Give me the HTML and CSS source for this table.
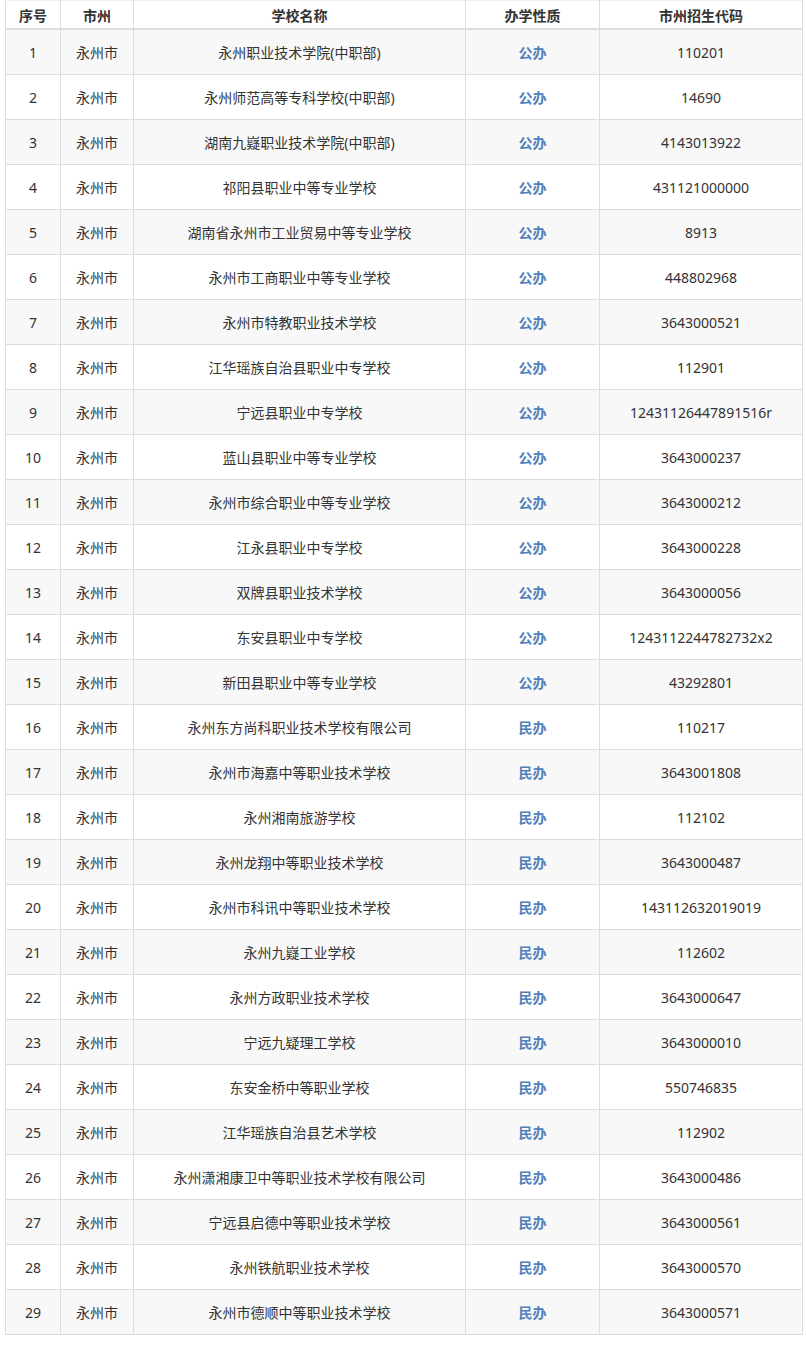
FILE: index.html
```html
<!DOCTYPE html>
<html lang="zh-CN">
<head>
<meta charset="utf-8">
<title>永州市中职学校</title>
<link rel="stylesheet" href="styles.css">
</head>
<body>
<div class="wrap">
<table class="list">
<colgroup>
<col class="c1"><col class="c2"><col class="c3"><col class="c4"><col class="c5">
</colgroup>
<thead>
<tr><th>序号</th><th>市州</th><th>学校名称</th><th>办学性质</th><th>市州招生代码</th></tr>
</thead>
<tbody>
<tr><td>1</td><td>永州市</td><td>永州职业技术学院(中职部)</td><td class="t">公办</td><td>110201</td></tr>
<tr><td>2</td><td>永州市</td><td>永州师范高等专科学校(中职部)</td><td class="t">公办</td><td>14690</td></tr>
<tr><td>3</td><td>永州市</td><td>湖南九嶷职业技术学院(中职部)</td><td class="t">公办</td><td>4143013922</td></tr>
<tr><td>4</td><td>永州市</td><td>祁阳县职业中等专业学校</td><td class="t">公办</td><td>431121000000</td></tr>
<tr><td>5</td><td>永州市</td><td>湖南省永州市工业贸易中等专业学校</td><td class="t">公办</td><td>8913</td></tr>
<tr><td>6</td><td>永州市</td><td>永州市工商职业中等专业学校</td><td class="t">公办</td><td>448802968</td></tr>
<tr><td>7</td><td>永州市</td><td>永州市特教职业技术学校</td><td class="t">公办</td><td>3643000521</td></tr>
<tr><td>8</td><td>永州市</td><td>江华瑶族自治县职业中专学校</td><td class="t">公办</td><td>112901</td></tr>
<tr><td>9</td><td>永州市</td><td>宁远县职业中专学校</td><td class="t">公办</td><td>12431126447891516r</td></tr>
<tr><td>10</td><td>永州市</td><td>蓝山县职业中等专业学校</td><td class="t">公办</td><td>3643000237</td></tr>
<tr><td>11</td><td>永州市</td><td>永州市综合职业中等专业学校</td><td class="t">公办</td><td>3643000212</td></tr>
<tr><td>12</td><td>永州市</td><td>江永县职业中专学校</td><td class="t">公办</td><td>3643000228</td></tr>
<tr><td>13</td><td>永州市</td><td>双牌县职业技术学校</td><td class="t">公办</td><td>3643000056</td></tr>
<tr><td>14</td><td>永州市</td><td>东安县职业中专学校</td><td class="t">公办</td><td>1243112244782732x2</td></tr>
<tr><td>15</td><td>永州市</td><td>新田县职业中等专业学校</td><td class="t">公办</td><td>43292801</td></tr>
<tr><td>16</td><td>永州市</td><td>永州东方尚科职业技术学校有限公司</td><td class="t">民办</td><td>110217</td></tr>
<tr><td>17</td><td>永州市</td><td>永州市海嘉中等职业技术学校</td><td class="t">民办</td><td>3643001808</td></tr>
<tr><td>18</td><td>永州市</td><td>永州湘南旅游学校</td><td class="t">民办</td><td>112102</td></tr>
<tr><td>19</td><td>永州市</td><td>永州龙翔中等职业技术学校</td><td class="t">民办</td><td>3643000487</td></tr>
<tr><td>20</td><td>永州市</td><td>永州市科讯中等职业技术学校</td><td class="t">民办</td><td>143112632019019</td></tr>
<tr><td>21</td><td>永州市</td><td>永州九嶷工业学校</td><td class="t">民办</td><td>112602</td></tr>
<tr><td>22</td><td>永州市</td><td>永州方政职业技术学校</td><td class="t">民办</td><td>3643000647</td></tr>
<tr><td>23</td><td>永州市</td><td>宁远九疑理工学校</td><td class="t">民办</td><td>3643000010</td></tr>
<tr><td>24</td><td>永州市</td><td>东安金桥中等职业学校</td><td class="t">民办</td><td>550746835</td></tr>
<tr><td>25</td><td>永州市</td><td>江华瑶族自治县艺术学校</td><td class="t">民办</td><td>112902</td></tr>
<tr><td>26</td><td>永州市</td><td>永州潇湘康卫中等职业技术学校有限公司</td><td class="t">民办</td><td>3643000486</td></tr>
<tr><td>27</td><td>永州市</td><td>宁远县启德中等职业技术学校</td><td class="t">民办</td><td>3643000561</td></tr>
<tr><td>28</td><td>永州市</td><td>永州铁航职业技术学校</td><td class="t">民办</td><td>3643000570</td></tr>
<tr><td>29</td><td>永州市</td><td>永州市德顺中等职业技术学校</td><td class="t">民办</td><td>3643000571</td></tr>
</tbody>
</table>
</div>
</body>
</html>
```
FILE: styles.css
```css
html, body {
  margin: 0;
  padding: 0;
  background: #ffffff;
}
.wrap {
  padding: 0 0 0 5px;
}
.list {
  border-collapse: collapse;
  table-layout: fixed;
  width: 797px;
  font-family: "Noto Sans", "Noto Sans CJK SC", sans-serif;
  font-size: 14px;
  color: #333333;
}
.c1 { width: 55px; }
.c2 { width: 73px; }
.c3 { width: 332px; }
.c4 { width: 134px; }
.c5 { width: 203px; }
.list th, .list td {
  border: 1px solid #dddddd;
  text-align: center;
  padding: 0;
  white-space: nowrap;
}
.list th {
  height: 27px;
  font-weight: bold;
  border-top-color: #eeeeee;
  border-bottom: 2px solid #dddddd;
}
.list td {
  height: 44px;
}
.list tbody tr:nth-child(odd) td {
  background: #f8f8f8;
}
.list td.t {
  color: #4f80bb;
  font-weight: bold;
}
```
